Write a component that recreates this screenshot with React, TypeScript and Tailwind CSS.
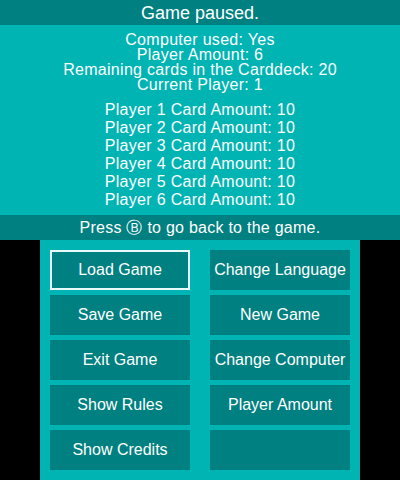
import React from 'react'

const info = [
    'Computer used: Yes',
    'Player Amount: 6',
    'Remaining cards in the Carddeck: 20',
    'Current Player: 1',
]

const players = [1, 2, 3, 4, 5, 6]

const buttons = [
    'Load Game',
    'Change Language',
    'Save Game',
    'New Game',
    'Exit Game',
    'Change Computer',
    'Show Rules',
    'Player Amount',
    'Show Credits',
    '',
]

export default function App() {
    return (
        <div className="w-[400px] h-[480px] bg-black text-white font-['Liberation_Sans',sans-serif]">
            {/* top screen */}
            <div className="h-[240px] bg-[#00b4b4] flex flex-col">
                <div className="h-[25px] bg-[#008080] flex items-center justify-center text-[18px] leading-none">
                    Game paused.
                </div>
                <div className="flex-1 flex flex-col items-center pt-[7px] text-[16px] tracking-[0.3px]">
                    {info.map((line) => (
                        <div key={line} className="leading-[15px]">{line}</div>
                    ))}
                    <div className="h-[9px]" />
                    {players.map((n) => (
                        <div key={n} className="leading-[18px]">Player {n} Card Amount: 10</div>
                    ))}
                </div>
                <div className="h-[25px] bg-[#008080] flex items-center justify-center text-[16px] leading-none tracking-[0.25px]">
                    Press Ⓑ to go back to the game.
                </div>
            </div>
            {/* bottom screen */}
            <div className="w-[320px] h-[240px] mx-auto bg-[#00b4b4] p-[10px] grid grid-cols-2 gap-x-[20px] gap-y-[5px]">
                {buttons.map((label, i) => (
                    <div
                        key={i}
                        className={
                            'h-[40px] bg-[#008080] flex items-center justify-center text-[16px] ' +
                            (i === 0 ? 'border-2 border-[#e8fafa]' : '')
                        }
                    >
                        {label}
                    </div>
                ))}
            </div>
        </div>
    )
}
